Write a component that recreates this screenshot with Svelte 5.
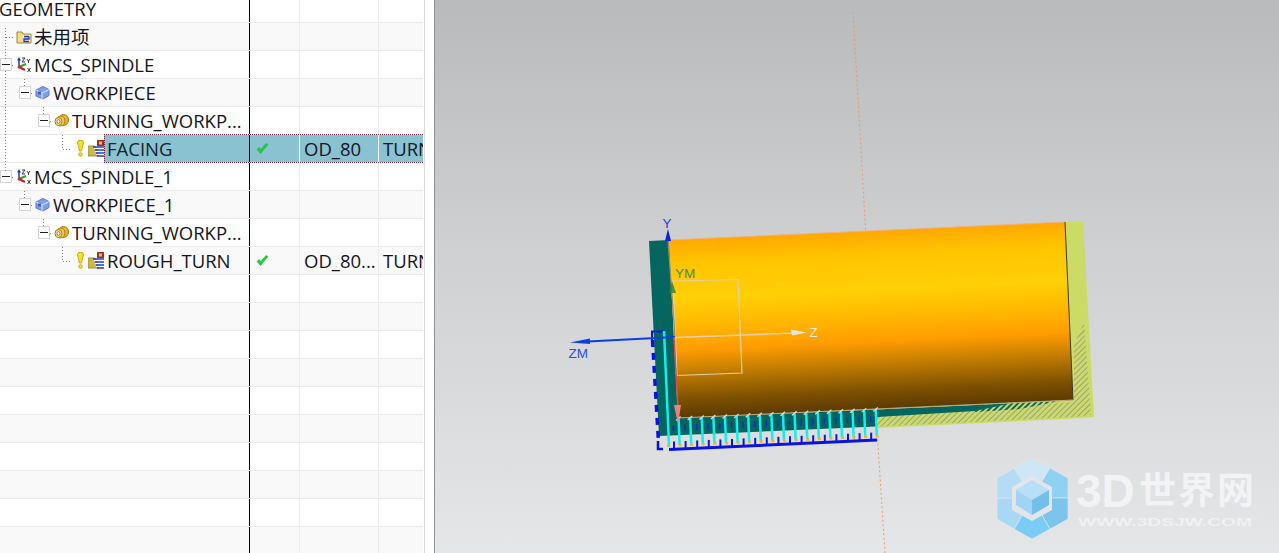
<script>
  const rows = [
    { name: "未用项", level: 0, icon: "folder" },
    { name: "MCS_SPINDLE", level: 0, icon: "mcs", box: true },
    { name: "WORKPIECE", level: 1, icon: "cube", box: true },
    { name: "TURNING_WORKP...", level: 2, icon: "rings", box: true },
    { name: "FACING", level: 3, icon: "op", ok: true, tool: "OD_80", method: "TURN", selected: true },
    { name: "MCS_SPINDLE_1", level: 0, icon: "mcs", box: true },
    { name: "WORKPIECE_1", level: 1, icon: "cube", box: true },
    { name: "TURNING_WORKP...", level: 2, icon: "rings", box: true },
    { name: "ROUGH_TURN", level: 3, icon: "op", ok: true, tool: "OD_80...", method: "TURN" },
    ...Array(10).fill({ name: "" })
  ];

  // toolpath passes, one every 11.6px along the bottom of the part
  const passes = Array.from({ length: 19 }, (_, i) => {
    const x = 668 + i * 11.6;
    return { x, top: 419 - (x - 668) * 0.045, bottom: 445.5 - (x - 668) * 0.045 };
  });

  // watermark hexagon, one blade per corner
  const blades = [
    ["1014,468 1032,458 1050,468", "#cfe6f5"],
    ["1050,468 1068,478 1068,498", "#8ed1f3"],
    ["1068,498 1068,519 1050,529", "#7bc4ec"],
    ["1050,529 1032,539 1014,529", "#7accf5"],
    ["1014,529 997,519 997,498", "#a9d8f5"],
    ["997,498 997,478 1014,468", "#b5dcf5"]
  ];
</script>

{#snippet icon(name)}
  {#if name === "folder"}
    <svg class="ico" width="16" height="16" viewBox="0 0 16 16">
      <path d="M1 3h5l1 2h8v9H1z" fill="#f3dc8a" stroke="#a08a40" />
      <rect x="7" y="6" width="7" height="7" fill="#fff6c8" />
      <path d="M8 7.500h5M13 7.500v2.500H8v2.500h5" fill="none" stroke="#1a2fd0" stroke-width="1.300" />
    </svg>
  {:else if name === "mcs"}
    <svg class="ico" width="16" height="16" viewBox="0 0 16 16">
      <path d="M3 10V3" stroke="#1a3ac0" stroke-width="1.500" />
      <path d="M3 0 1 3.500h4z" fill="#1a3ac0" />
      <path d="M3 10 10 7" stroke="#2aa52a" stroke-width="2" />
      <path d="M3 10 9 13" stroke="#d02020" stroke-width="2.500" />
      <circle cx="3" cy="10" r="1.500" fill="#c03030" />
      <path d="M6 1h3L6 5h3M11 2l1.500 2L14 2M12.500 4v2M11.500 11l3 4M14.500 11l-3 4" fill="none" stroke="#333" />
    </svg>
  {:else if name === "cube"}
    <svg class="ico" width="15" height="15" viewBox="0 0 15 15">
      <path d="M1 5 8 1.500l6 3v6L8 14l-7-3z" fill="#7f9fe8" stroke="#5a78d0" />
      <path d="M1 5l6 3 7-3.500M7 8v6" fill="none" stroke="#dfe8ff" />
      <rect x="3" y="6.500" width="3" height="3" fill="#3f62c8" />
    </svg>
  {:else if name === "rings"}
    <svg class="ico" width="15" height="15" viewBox="0 0 15 15">
      <ellipse cx="9.500" cy="7" rx="5" ry="5.500" fill="#e8b030" stroke="#a87810" />
      <ellipse cx="6.500" cy="8" rx="4.500" ry="5" fill="#f2d060" stroke="#a87810" />
      <ellipse cx="4.500" cy="8.500" rx="3.500" ry="4" fill="#f8e49a" stroke="#a87810" />
      <ellipse cx="4.500" cy="8.500" rx="1.500" ry="2" fill="#fff" stroke="#a87810" />
    </svg>
  {:else if name === "op"}
    <svg class="ico warn" width="9" height="17" viewBox="0 0 9 17">
      <path d="M1.500 2.500a3 2.300 0 0 1 6 0L5.500 11h-2z" fill="#f6e020" stroke="#b09a10" stroke-width=".8" />
      <circle cx="4.500" cy="14.500" r="1.800" fill="#f6e020" stroke="#b09a10" stroke-width=".8" />
    </svg>
    <svg class="ico" width="17" height="17" viewBox="0 0 17 17">
      <path d="M0 6h7l4 10H0z" fill="#cdb84e" stroke="#8f8030" stroke-width=".8" />
      <rect x="9" y="0" width="7" height="6" fill="#a03020" />
      <rect x="11" y="1.500" width="3" height="3" fill="#f0c040" />
      <path d="M5 7h11M7 10h9M8 13h8M9 16h7" stroke="#2040c8" stroke-width="1.300" />
      <path d="M6 8.500h10M7 11.500h9M8 14.500h8" stroke="#fff" />
    </svg>
  {/if}
{/snippet}

<div class="page">
  <section class="panel">
    <div class="table">
      <div class="row head">
        <div class="cell name"><span class="title">GEOMETRY</span></div>
        <div class="cell"></div>
        <div class="cell"></div>
        <div class="cell last"></div>
      </div>
      {#each rows as row, i}
        <div class="row" class:alt={i % 2 === 0} class:selected={row.selected}>
          <div class="cell name" style={row.name ? `padding-left:${row.level * 19}px` : ""}>
            {#if row.name}
              {#if row.box}
                <span class="box"></span>
              {:else}
                <span class="stub"></span>
              {/if}
              <span class="icons" class:ops={row.icon === "op"}>{@render icon(row.icon)}</span>
              <span class="label">{row.name}</span>
            {/if}
          </div>
          <div class="cell state">
            {#if row.ok}
              <svg width="13" height="13" viewBox="0 0 13 13">
                <path d="M1 7.500 4.500 11.500 12 2.500 10 1.500 4.800 7.500 3 5.500z" fill="#1fcf35" stroke="#12a828" stroke-width=".5" />
              </svg>
            {/if}
          </div>
          <div class="cell tool">{row.tool ?? ""}</div>
          <div class="cell last tool">{row.method ?? ""}</div>
        </div>
      {/each}
      <svg class="links" width="120" height="280" viewBox="0 0 120 280">
        <path d="M5.500 28V59M5.500 71V171M6 37.500H15M12 65.500h3M24.500 79v8M43.500 107v8M62.500 135v14.500H71" />
        <path d="M12 177.500h3M24.500 191v8M43.500 219v8M62.500 247v14.500H71" />
        <path d="M31 93.500h3M50 121.500h3M31 205.500h3M50 233.500h3" />
      </svg>
    </div>
    <div class="gutter"></div>
  </section>

  <main class="viewport">
    <svg class="scene" width="844" height="553" viewBox="435 0 844 553">
      <defs>
        <linearGradient id="body" gradientUnits="userSpaceOnUse" x1="869" y1="231" x2="877" y2="409">
          <stop offset="0" stop-color="#ffa800" />
          <stop offset=".13" stop-color="#ffc400" />
          <stop offset=".33" stop-color="#ffd006" />
          <stop offset=".48" stop-color="#ffb800" />
          <stop offset=".62" stop-color="#ff9c00" />
          <stop offset=".75" stop-color="#c07c00" />
          <stop offset=".9" stop-color="#7c5000" />
          <stop offset="1" stop-color="#5c3a00" />
        </linearGradient>
        <pattern id="hatch" width="4" height="4" patternUnits="userSpaceOnUse" patternTransform="rotate(-45)">
          <rect width="4" height="1" fill="#9aa088" />
        </pattern>
        <pattern id="tealHatch" width="4" height="4" patternUnits="userSpaceOnUse" patternTransform="rotate(-45)">
          <rect width="4" height="2" fill="#0a6a62" />
        </pattern>
      </defs>

      <!-- datum line -->
      <path d="M853 12 866 236M877 430 885 553" fill="none" stroke="#ee9a62" stroke-dasharray="2 2.500" />

      <!-- end and underside faces -->
      <polygon points="1065,222 1083,221.500 1094,417 1074,418.500 876,428 877,410 1073,400" fill="#cbdb66" />
      <polygon points="1074,345 1084,322 1091,415 1074,417 877,426.500 877,416 1074,402" fill="url(#hatch)" />
      <polygon points="649,241 669,240 678,418 877,409.500 876,426.500 659,436" fill="#05665f" />
      <polygon points="877,409.500 1010,403.500 975,411 877,417" fill="#05665f" />
      <polygon points="975,405 1060,401 1020,409 975,412" fill="url(#tealHatch)" />

      <!-- part -->
      <polygon points="669,240 1065,222 1073,400 678,418" fill="url(#body)" />
      <path d="M669 240 1065 222" stroke="#f4b080" fill="none" />
      <path d="M1065 222 1073 400" stroke="#3a3a30" fill="none" />
      <path d="M678 418 1073 400" stroke="#c0a878" fill="none" />

      <!-- toolpath -->
      <path d="M652 340V331.500H665" fill="none" stroke="#0a14e0" stroke-width="2" />
      <path d="M652.500 340 658.500 442" fill="none" stroke="#0a14e0" stroke-width="3.500" stroke-dasharray="7 6" />
      <path d="M658 441V449H663" fill="none" stroke="#0a14e0" stroke-width="2.500" />
      <path d="M669 449.500 877 440" fill="none" stroke="#0a14e0" stroke-width="3" />
      <path d="M664 331 669 445" stroke="#10f0f0" stroke-width="2.500" />
      {#each passes as p, i}
        {#if i > 0}
          <path d={`M${p.x - 1} ${p.top} ${p.x} ${p.bottom}`} stroke="#10f0f0" stroke-width="2.500" />
          <path d={`M${p.x - 3.500} ${p.top + 2} ${p.x + 1} ${p.top - 2}`} stroke="#dcdcdc" stroke-width="1.300" />
        {/if}
        <rect x={p.x - 1} y={p.bottom - 1} width="3" height="2.500" fill="#f6b420" />
        {#if i < 18}
          <path d={`M${p.x + 6} ${p.bottom + 3} v-7`} stroke="#0a14e0" stroke-width="2" />
          <path d={`M${p.x + 5.500} ${p.top + 6} v6`} stroke="#1030c0" stroke-width="1.500" />
        {/if}
      {/each}

      <!-- work coordinate system -->
      <polygon points="673,281 738,279.500 742,373 677,375.500" fill="none" stroke="#e2cfa8" stroke-width="1.200" />
      <path d="M668 240 675 337" stroke="#9a8a70" stroke-width="1.200" fill="none" />
      <polygon points="668,229 665,241 671,241" fill="#0b22e0" />
      <polygon points="672,281 669,293 676,293" fill="#3f7a40" opacity=".85" />
      <path d="M675 337.500 795 333" stroke="#e8cfa8" stroke-width="1.500" fill="none" />
      <polygon points="807,332.500 791,329.500 792,335.500" fill="#e4e4e4" />
      <path d="M675 337 588 341.500" stroke="#0a40e0" stroke-width="2" fill="none" />
      <polygon points="570,342.500 590,338.500 590,344" fill="#0a40e0" />
      <path d="M674 337 678 408" stroke="#e84848" stroke-width="1.500" fill="none" />
      <polygon points="678,424 674,405 681,405" fill="#f08080" />

      <text class="axis" x="662.500" y="228" fill="#2040d0">Y</text>
      <text class="axis" x="675" y="278" fill="#3f8f50">YM</text>
      <text class="axis" x="809.500" y="337" fill="#eeeee2">Z</text>
      <text class="axis" x="568.500" y="358" fill="#2a52e0">ZM</text>

      <!-- watermark -->
      {#each blades as [corner, fill]}
        <polygon points={`1032,498 ${corner}`} {fill} stroke="#e6e7ea" stroke-width=".6" />
      {/each}
      <polygon points="1032,476 1052,487 1052,510 1032,521 1012,510 1012,487" fill="#e4e5e8" />
      <polygon points="1032,480 1049,490 1032,500 1016,490" fill="#b9def7" />
      <polygon points="1016,490 1032,500 1032,515 1016,505" fill="#a2d3f5" />
      <polygon points="1049,490 1032,500 1032,515 1049,505" fill="#72c0ea" />
      <text class="brand-num" x="1076" y="507">3D</text>
      <text class="brand" x="1139" y="504">世界网</text>
      <text class="site" x="1078" y="526" textLength="174" lengthAdjust="spacingAndGlyphs">WWW.3DSJW.COM</text>
    </svg>
  </main>
</div>

<style>
  :global(body) {
    background: #fff;
    overflow: hidden;
  }

  .page {
    display: flex;
    font-family: "Open Sans", "Noto Sans CJK SC", sans-serif;
    height: 553px;
    overflow: hidden;
    width: 1279px;
  }

  .panel {
    display: flex;
    flex: none;
    width: 435px;
  }

  .table {
    flex: none;
    height: 553px;
    overflow: hidden;
    position: relative;
    width: 423px;
  }

  .gutter {
    background: #fff;
    border-left: 1px solid #d9d9d9;
    border-right: 1px solid #8c9298;
    flex: 1;
    margin-left: 1px;
  }

  .row {
    border-bottom: 1px solid #e9e9e9;
    box-sizing: border-box;
    color: #14141e;
    display: grid;
    font-size: 18.500px;
    grid-template-columns: 250px 50px 79px 44px;
    height: 28px;
    line-height: 27px;
  }

  .row.head {
    height: 23px;
    line-height: 18px;
  }

  .row.alt {
    background: #f9f9f9;
  }

  .cell {
    border-right: 1px solid #ececec;
    box-sizing: border-box;
    min-width: 0;
    overflow: hidden;
    white-space: nowrap;
  }

  .cell.last {
    border-right: none;
  }

  .cell.name {
    align-items: center;
    border-right: 1px solid #000;
    display: flex;
  }

  .row.head .cell.name {
    display: block;
  }

  .title {
    margin-left: -1px;
  }

  .state {
    align-items: center;
    display: flex;
    padding-left: 6px;
  }

  .tool {
    padding-left: 4px;
  }

  .box {
    background: #fff;
    border: 1px solid #d4d4d4;
    box-sizing: border-box;
    flex: none;
    height: 13px;
    margin-right: 4px;
    position: relative;
    width: 12px;
  }

  .box::after {
    background: #222;
    content: "";
    height: 1px;
    left: 1px;
    position: absolute;
    top: 5px;
    width: 8px;
  }

  .stub {
    flex: none;
    margin-right: 4px;
    width: 12px;
  }

  .icons {
    align-items: center;
    display: flex;
    flex: none;
    margin-right: 2px;
    width: 16px;
  }

  .icons.ops {
    margin-left: 3px;
    margin-right: 0;
    width: 31px;
  }

  .ico {
    display: block;
    flex: none;
  }

  .warn {
    margin-right: 3px;
  }

  .label {
    flex: none;
  }

  .row.selected {
    background: linear-gradient(#8ac2d2, #8ac2d2) no-repeat 104px 0 / 320px 100%;
    position: relative;
  }

  .row.selected::after {
    border-bottom: 1px dotted #6b2438;
    border-left: 1px dotted #6b2438;
    border-top: 1px dotted #6b2438;
    content: "";
    height: 27px;
    left: 104px;
    position: absolute;
    right: 0;
    top: -1px;
  }

  .row.selected .cell:not(.name):not(.last) {
    border-right-color: #f0f6f8;
  }

  .row.selected .label {
    color: #14222c;
  }

  .links {
    left: 0;
    pointer-events: none;
    position: absolute;
    top: 0;
  }

  .links path {
    fill: none;
    stroke: #808080;
    stroke-dasharray: 1 2;
  }

  .viewport {
    background: linear-gradient(#b9babc, #cfd0d2 45%, #e5e6e8);
    flex: 1;
    height: 553px;
    overflow: hidden;
  }

  .scene {
    display: block;
  }

  .axis {
    font-family: "Liberation Sans", sans-serif;
    font-size: 13.500px;
  }

  .brand-num {
    fill: #f2f3f5;
    font-family: "Liberation Sans", sans-serif;
    font-size: 46px;
    font-weight: 700;
  }

  .brand {
    fill: #f2f3f5;
    font-family: "Noto Sans CJK SC", sans-serif;
    font-size: 37px;
    font-weight: 700;
    letter-spacing: 2px;
  }

  .site {
    fill: #f0f1f3;
    font-family: "Liberation Sans", sans-serif;
    font-size: 11px;
    font-weight: 700;
  }
</style>
